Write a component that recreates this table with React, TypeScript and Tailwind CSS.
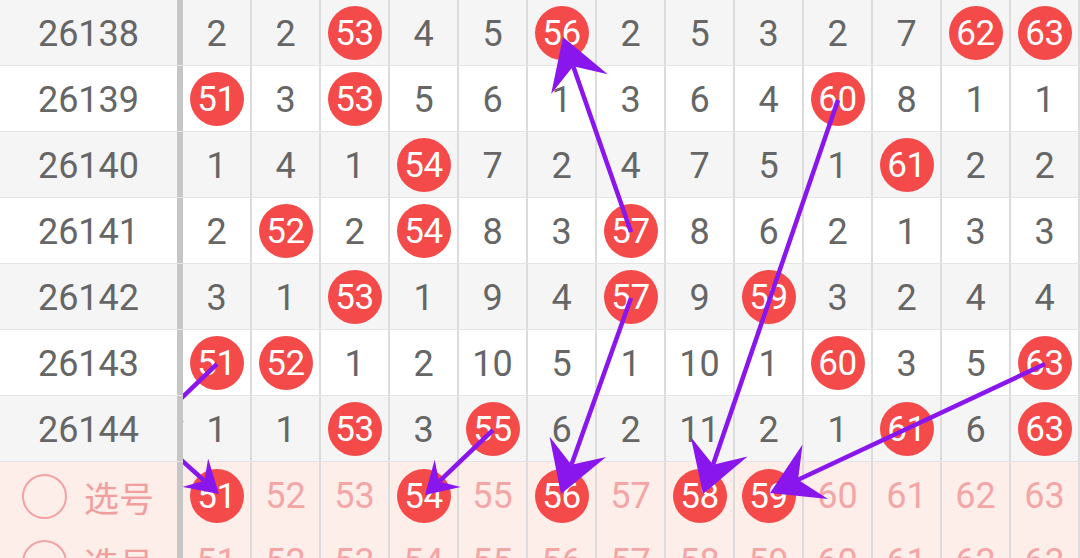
import React from "react";

type Row = [string, number[]];

const rows: Row[] = [
  ["26138", [2, 2, 53, 4, 5, 56, 2, 5, 3, 2, 7, 62, 63]],
  ["26139", [51, 3, 53, 5, 6, 1, 3, 6, 4, 60, 8, 1, 1]],
  ["26140", [1, 4, 1, 54, 7, 2, 4, 7, 5, 1, 61, 2, 2]],
  ["26141", [2, 52, 2, 54, 8, 3, 57, 8, 6, 2, 1, 3, 3]],
  ["26142", [3, 1, 53, 1, 9, 4, 57, 9, 59, 3, 2, 4, 4]],
  ["26143", [51, 52, 1, 2, 10, 5, 1, 10, 1, 60, 3, 5, 63]],
  ["26144", [1, 1, 53, 3, 55, 6, 2, 11, 2, 1, 61, 6, 63]],
];

const pickNums = [51, 52, 53, 54, 55, 56, 57, 58, 59, 60, 61, 62, 63];
const picks: number[][] = [[51, 54, 56, 58, 59], []];

const FONT = { fontFamily: "Roboto, 'Noto Sans CJK SC', sans-serif" };

const Ball = ({ n }: { n: number }) => (
  <div className="w-[54px] h-[54px] rounded-full bg-[#f44a4a] text-white flex items-center justify-center text-[35px] leading-none tracking-[-0.5px]">
    {n}
  </div>
);

const arrows: [number, number, number, number][] = [
  [631, 232, 563, 37],
  [838, 100, 703, 494],
  [631, 298, 561, 494],
  [493, 430, 425, 495],
  [1045, 364, 770, 493],
  [217, 364, 148, 430],
  [148, 430, 219, 494],
];

function Arrow({ a }: { a: [number, number, number, number] }) {
  const OX = 183;
  const [x1, y1, x2, y2] = [a[0] - OX, a[1], a[2] - OX, a[3]];
  const dx = x2 - x1;
  const dy = y2 - y1;
  const L = Math.hypot(dx, dy);
  const ux = dx / L;
  const uy = dy / L;
  const len = Math.min(50, L / 3);
  const w = len * 0.6;
  const bx = x2 - ux * len;
  const by = y2 - uy * len;
  const nx = -uy;
  const ny = ux;
  const kx = x2 - ux * len * 0.62;
  const ky = y2 - uy * len * 0.62;
  const pts = `${x2},${y2} ${bx + nx * w},${by + ny * w} ${kx},${ky} ${bx - nx * w},${by - ny * w}`;
  return (
    <g>
      <line x1={x1} y1={y1} x2={kx} y2={ky} stroke="#8a16ee" strokeWidth={4.5} />
      <polygon points={pts} fill="#8a16ee" />
    </g>
  );
}

export default function App() {
  return (
    <div className="relative w-[1080px] h-[558px] overflow-hidden bg-white" style={FONT}>
      <div className="flex flex-col">
        {rows.map(([id, vals], i) => (
          <div
            key={id}
            className={`flex h-[66px] border-b border-[#e4e4e4] ${i % 2 === 0 ? "bg-[#f5f5f5]" : "bg-white"}`}
          >
            <div className="w-[183px] shrink-0 border-r-[6px] border-[#c6c6c6] flex items-center justify-center text-[36px] leading-none text-[#666666] pt-[3px]">
              {id}
            </div>
            {vals.map((v, j) => (
              <div
                key={j}
                className={`w-[69px] shrink-0 border-r-2 border-[#dcdcdc] flex items-center justify-center text-[36px] leading-none text-[#666666] ${v >= 50 ? "pt-[1px]" : "pt-[3px]"}`}
              >
                {v >= 50 ? <Ball n={v} /> : v}
              </div>
            ))}
          </div>
        ))}
        {picks.map((sel, i) => (
          <div key={i} className="flex h-[66px] bg-[#fdeeea]">
            <div className="w-[183px] shrink-0 border-r-[6px] border-[#c6c6c6] flex items-center pl-[22px] gap-[17px] text-[#f19e9e] pt-[2px]">
              <div className="w-[45px] h-[45px] rounded-full border-2 border-[#f2a3a3]" />
              <span className="text-[35px] leading-none" style={{ fontFamily: "'Noto Sans CJK SC', sans-serif" }}>
                选号
              </span>
            </div>
            {pickNums.map((n) => (
              <div
                key={n}
                className="w-[69px] shrink-0 border-r-2 border-[#dcdcdc] flex items-center justify-center text-[36px] leading-none text-[#f4a6a6] pt-[2px]"
              >
                {sel.includes(n) ? <Ball n={n} /> : n}
              </div>
            ))}
          </div>
        ))}
      </div>
      <svg className="absolute left-[183px] top-0" width={897} height={558} viewBox="0 0 897 558">
        {arrows.map((a, i) => (
          <Arrow key={i} a={a} />
        ))}
      </svg>
    </div>
  );
}
